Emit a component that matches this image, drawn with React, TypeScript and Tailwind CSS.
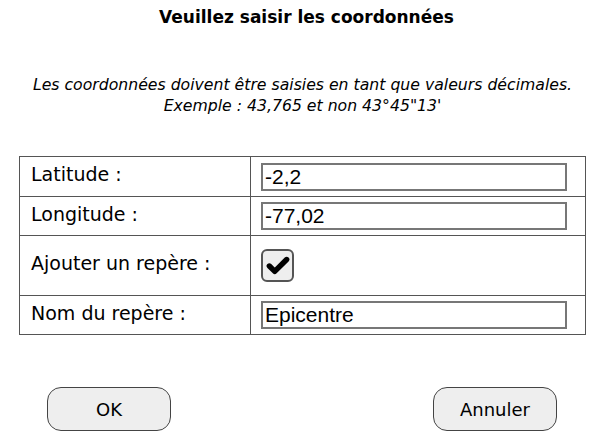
import { Check } from 'lucide-react';

const rows = [
  { label: 'Latitude :', value: '-2,2' },
  { label: 'Longitude :', value: '-77,02' },
  { label: 'Ajouter un repère :', checkbox: true },
  { label: 'Nom du repère :', value: 'Epicentre' },
];

export default function App() {
  return (
    <div className="w-[613px] h-[441px] bg-white text-black flex flex-col items-center font-['DejaVu_Sans',sans-serif]">
      <h1 className="pt-[6px] text-[17px] leading-[22px] font-bold">Veuillez saisir les coordonnées</h1>

      <div className="mt-[46px] pr-[8px] text-center italic text-[15.7px] leading-[21px]">
        <p>Les coordonnées doivent être saisies en tant que valeurs décimales.</p>
        <p>Exemple : 43,765 et non 43°45"13'</p>
      </div>

      {/* Grille des champs */}
      <div className="mt-[40px] self-start ml-[19px] w-[567px] border border-[#555]">
        {rows.map((r, i) => (
          <div
            key={r.label}
            className={`grid grid-cols-[231px_1fr] ${i > 0 ? 'border-t border-[#555]' : ''} ${r.checkbox ? 'h-[60px]' : 'h-[39px]'}`}
          >
            <div className="flex items-center pl-[11px] pb-[4px] text-[19px] border-r border-[#555]">{r.label}</div>
            <div className="flex items-center pl-[10px]">
              {r.checkbox ? (
                <div className="w-[33px] h-[33px] rounded-[6px] border-2 border-[#555] bg-[#eee] flex items-center justify-center">
                  <Check className="w-[26px] h-[26px]" strokeWidth={5} />
                </div>
              ) : (
                <div className="w-[306px] h-[28px] border-2 border-[#777] flex items-center px-[2px] text-[21px] font-['Liberation_Sans',sans-serif]">
                  {r.value}
                </div>
              )}
            </div>
          </div>
        ))}
      </div>

      <div className="mt-[52px] w-full flex justify-between pl-[47px] pr-[56px]">
        <button className="w-[124px] h-[44px] rounded-[14px] border border-[#444] bg-[#eee] text-[18px]">OK</button>
        <button className="w-[124px] h-[44px] rounded-[14px] border border-[#444] bg-[#eee] text-[18px]">Annuler</button>
      </div>
    </div>
  );
}
